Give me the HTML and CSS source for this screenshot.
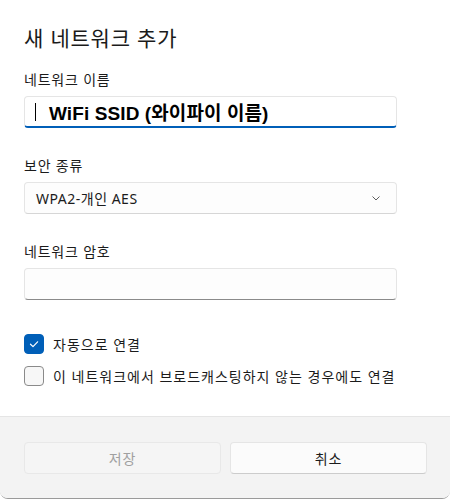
FILE: index.html
```html
<!DOCTYPE html>
<html lang="ko">
<head>
<meta charset="utf-8">
<title>새 네트워크 추가</title>
<link rel="stylesheet" href="styles.css">
</head>
<body>
<div class="dialog">
  <div class="content">
    <h1 class="title">새 네트워크 추가</h1>

    <label class="label">네트워크 이름</label>
    <div class="field focused">
      <span class="caret"></span>
      <span class="ssid">WiFi SSID (와이파이 이름)</span>
    </div>

    <label class="label gap">보안 종류</label>
    <div class="field select">
      <span class="value">WPA2-개인 AES</span>
      <svg class="chevron" width="12" height="12" viewBox="0 0 12 12"><path d="M2.5 4.5 L6 8 L9.5 4.5" fill="none" stroke="#5f5f5f" stroke-width="1"/></svg>
    </div>

    <label class="label gap">네트워크 암호</label>
    <div class="field password"></div>

    <div class="checks">
      <div class="check">
        <span class="box checked">
          <svg width="12" height="12" viewBox="0 0 12 12"><path d="M2.5 6.2 L5 8.6 L9.6 3.8" fill="none" stroke="#fff" stroke-width="1.2" stroke-linecap="round" stroke-linejoin="round"/></svg>
        </span>
        <span class="check-text">자동으로 연결</span>
      </div>
      <div class="check">
        <span class="box"></span>
        <span class="check-text">이 네트워크에서 브로드캐스팅하지 않는 경우에도 연결</span>
      </div>
    </div>
  </div>

  <div class="footer">
    <button class="btn disabled">저장</button>
    <button class="btn">취소</button>
  </div>
</div>
</body>
</html>
```

FILE: styles.css
```css
* { box-sizing: border-box; }

html, body {
  margin: 0;
  padding: 0;
  background: #ffffff;
}

body {
  font-family: "Noto Sans", "Noto Sans CJK KR", sans-serif;
  color: #1b1b1b;
  width: 450px;
  height: 499px;
  overflow: hidden;
}

.dialog {
  height: 499px;
  display: flex;
  flex-direction: column;
  border-bottom: 1px solid #9a9a9a;
  border-radius: 0 0 8px 8px;
  overflow: hidden;
}

.content {
  flex: 1;
  padding: 24px 53px 0 24px;
  display: flex;
  flex-direction: column;
}

.title {
  margin: 0;
  font-size: 21px;
  font-weight: 400;
  letter-spacing: 0.8px;
  line-height: 28px;
  height: 28px;
}

.label {
  display: block;
  font-size: 14px;
  letter-spacing: 0.8px;
  line-height: 20px;
  margin-top: 18px;
  margin-bottom: 6px;
}

.label.gap { margin-top: 28px; }

.field {
  height: 32px;
  border: 1px solid #e5e5e5;
  border-bottom-color: #8a8a8a;
  border-radius: 4px;
  background: #fdfdfd;
  display: flex;
  align-items: center;
}

.field.focused {
  border-bottom: 2px solid #005fb8;
  background: #ffffff;
  padding-left: 10px;
}

.caret {
  width: 1px;
  height: 18px;
  background: #000;
  margin-right: 13px;
}

.ssid {
  font-family: "Liberation Sans", "Noto Sans CJK KR", sans-serif;
  font-weight: 700;
  font-size: 19px;
  color: #000;
  letter-spacing: 0.1px;
}

.field.select {
  border-bottom-color: #d6d6d6;
  padding: 0 12px 0 11px;
  justify-content: space-between;
}

.value {
  font-size: 14px;
  letter-spacing: 0.5px;
}

.chevron { margin-right: 2px; }

.checks {
  margin-top: 34px;
  display: flex;
  flex-direction: column;
  gap: 12px;
}

.check {
  display: flex;
  align-items: center;
  height: 20px;
}

.box {
  width: 20px;
  height: 20px;
  border-radius: 4px;
  border: 1px solid #8a8a8a;
  background: #f7f7f7;
  margin-right: 9px;
  display: flex;
  align-items: center;
  justify-content: center;
}

.box.checked {
  background: #005fb8;
  border-color: #005fb8;
}

.check-text {
  font-size: 14px;
  letter-spacing: 1px;
}

.footer {
  height: 82px;
  background: #f3f3f3;
  border-top: 1px solid #e5e5e5;
  padding: 25px 23px 0 24px;
  display: flex;
  gap: 9px;
}

.btn {
  flex: 1;
  height: 32px;
  border: 1px solid #e5e5e5;
  border-bottom-color: #cccccc;
  border-radius: 4px;
  background: #fbfbfb;
  font-family: "Noto Sans", "Noto Sans CJK KR", sans-serif;
  font-size: 14px;
  letter-spacing: 0.8px;
  color: #1b1b1b;
}

.btn.disabled {
  background: #f5f5f5;
  border-color: #e8e8e8;
  color: #a0a0a0;
}
```
